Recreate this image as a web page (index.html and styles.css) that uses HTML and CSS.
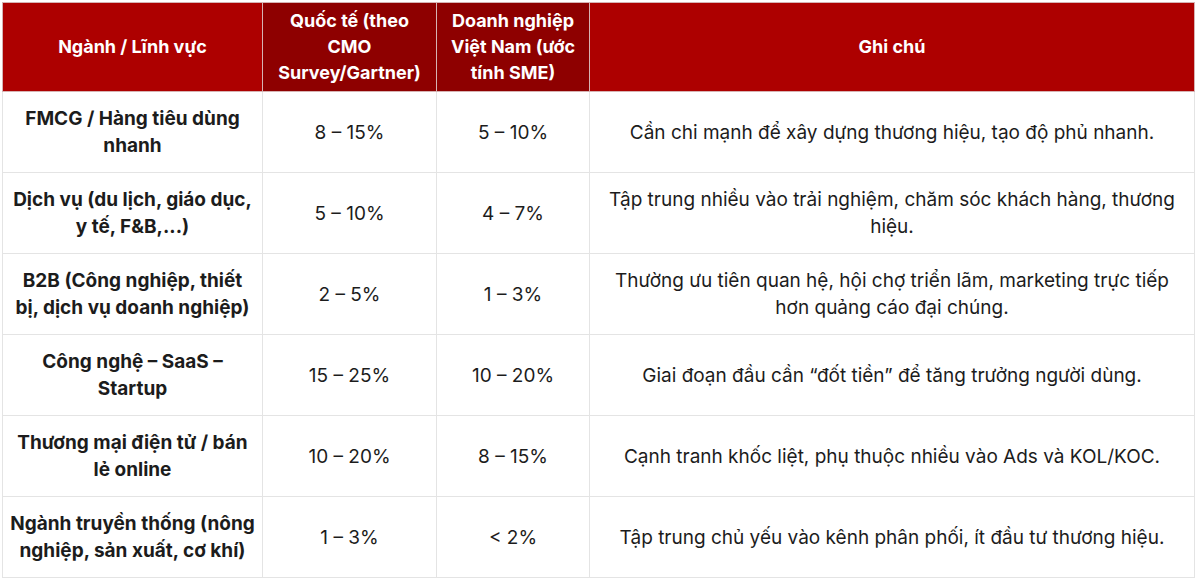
FILE: index.html
```html
<!DOCTYPE html>
<html lang="vi">
<head>
<meta charset="utf-8">
<title>Ngân sách marketing theo ngành</title>
<link rel="stylesheet" href="styles.css">
</head>
<body>
<div class="wrap">
<table class="budget">
  <colgroup>
    <col class="c1"><col class="c2"><col class="c3"><col class="c4">
  </colgroup>
  <thead>
    <tr>
      <th>Ngành / Lĩnh vực</th>
      <th class="dark">Quốc tế (theo CMO Survey/Gartner)</th>
      <th class="dark">Doanh nghiệp Việt Nam (ước tính SME)</th>
      <th>Ghi chú</th>
    </tr>
  </thead>
  <tbody>
    <tr>
      <td class="name">FMCG / Hàng tiêu dùng nhanh</td>
      <td>8 – 15%</td>
      <td>5 – 10%</td>
      <td class="note">Cần chi mạnh để xây dựng thương hiệu, tạo độ phủ nhanh.</td>
    </tr>
    <tr>
      <td class="name">Dịch vụ (du lịch, giáo dục, y tế, F&amp;B,...)</td>
      <td>5 – 10%</td>
      <td>4 – 7%</td>
      <td class="note">Tập trung nhiều vào trải nghiệm, chăm sóc khách hàng, thương hiệu.</td>
    </tr>
    <tr>
      <td class="name">B2B (Công nghiệp, thiết<br>bị, dịch vụ doanh nghiệp)</td>
      <td>2 – 5%</td>
      <td>1 – 3%</td>
      <td class="note">Thường ưu tiên quan hệ, hội chợ triển lãm, marketing trực tiếp hơn quảng cáo đại chúng.</td>
    </tr>
    <tr>
      <td class="name">Công nghệ – SaaS – Startup</td>
      <td>15 – 25%</td>
      <td>10 – 20%</td>
      <td class="note">Giai đoạn đầu cần “đốt tiền” để tăng trưởng người dùng.</td>
    </tr>
    <tr>
      <td class="name">Thương mại điện tử / bán lẻ online</td>
      <td>10 – 20%</td>
      <td>8 – 15%</td>
      <td class="note">Cạnh tranh khốc liệt, phụ thuộc nhiều vào Ads và KOL/KOC.</td>
    </tr>
    <tr>
      <td class="name">Ngành truyền thống (nông nghiệp, sản xuất, cơ khí)</td>
      <td>1 – 3%</td>
      <td>&lt; 2%</td>
      <td class="note">Tập trung chủ yếu vào kênh phân phối, ít đầu tư thương hiệu.</td>
    </tr>
  </tbody>
</table>
</div>
</body>
</html>
```

FILE: styles.css
```css
html, body {
  margin: 0;
  padding: 0;
  background: #ffffff;
}

.wrap {
  padding: 2px 0 0 2px;
}

.budget {
  border-collapse: collapse;
  table-layout: fixed;
  width: 1192px;
  font-family: "Inter", "Liberation Sans", sans-serif;
  font-size: 19px;
  color: #1c1c1c;
}

.c1 { width: 260px; }
.c2 { width: 174px; }
.c3 { width: 153px; }
.c4 { width: 605px; }

.budget th {
  background: #ad0000;
  color: #ffffff;
  font-size: 18px;
  font-weight: 700;
  line-height: 26px;
  height: 89px;
  padding: 0 8px;
  box-sizing: border-box;
  text-align: center;
  vertical-align: middle;
  border: 1px solid #d6b3b3;
}

.budget th.dark {
  background: #8e0000;
}

.budget td {
  height: 81px;
  line-height: 27px;
  padding: 0 8px;
  box-sizing: border-box;
  text-align: center;
  vertical-align: middle;
  border: 1px solid #e4e4e4;
  font-weight: 400;
}

.budget td.name {
  font-weight: 700;
  padding: 0 5px;
}

.budget td.note {
  padding: 0 12px;
}
```
